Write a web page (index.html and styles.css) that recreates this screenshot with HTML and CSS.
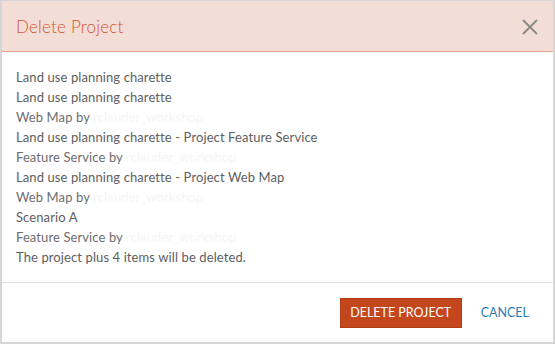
FILE: index.html
```html
<!DOCTYPE html>
<html>

<head>
    <title>Delete Project</title>
    <link rel="stylesheet" href="styles.css">
</head>

<body>
    <div class="modal">
        <div class="modal-header">
            <h2 class="modal-title">Delete Project</h2>
            <span class="modal-close">
                <svg width="16" height="16" viewBox="0 0 16 16">
                    <path d="M1 1 L15 15 M15 1 L1 15" stroke="#888" stroke-width="1.8" fill="none"/>
                </svg>
            </span>
        </div>
        <div class="modal-body">
            <p>Land use planning charette</p>
            <p>Land use planning charette</p>
            <p class="meta">Web Map by <span class="owner">rclauder_workshop</span></p>
            <p>Land use planning charette - Project Feature Service</p>
            <p class="meta">Feature Service by <span class="owner">rclauder_workshop</span></p>
            <p>Land use planning charette - Project Web Map</p>
            <p class="meta">Web Map by <span class="owner">rclauder_workshop</span></p>
            <p>Scenario A</p>
            <p class="meta">Feature Service by <span class="owner">rclauder_workshop</span></p>
            <p>The project plus 4 items will be deleted.</p>
        </div>
        <div class="modal-footer">
            <button type="button" class="btn-delete">DELETE PROJECT</button>
            <button type="button" class="btn-cancel">CANCEL</button>
        </div>
    </div>
</body>

</html>
```

FILE: styles.css
```css
body {
    margin: 0;
    background-color: #fff;
    font-family: 'Lato', 'Noto Sans', sans-serif;
}

.modal {
    width: 555px;
    height: 344px;
    box-sizing: border-box;
    border: 1px solid #d6d6d6;
    border-left: 2px solid #d6d6d6;
    border-right: 2px solid #d6d6d6;
    border-bottom: 2px solid #d6d6d6;
    display: flex;
    flex-direction: column;
}

.modal-header {
    height: 50px;
    background-color: #f3ded7;
    border-bottom: 1px solid #e6a593;
    display: flex;
    align-items: center;
    justify-content: space-between;
    padding: 0 15px 0 14px;
}

.modal-title {
    margin: 0;
    font-size: 17px;
    font-weight: 300;
    color: #d4532d;
    letter-spacing: 0.2px;
}

.modal-close {
    display: flex;
    margin-top: 2px;
}

.modal-body {
    padding: 15px 14px 0 14px;
    height: 215px;
    border-bottom: 1px solid #dedede;
}

.modal-body p {
    margin: 0;
    font-size: 13px;
    line-height: 20px;
    letter-spacing: 0.1px;
    color: #5e5e5e;
}

.modal-body p.meta {
    color: #6e6e6e;
}

.owner {
    color: #f6f6f6;
}

.modal-footer {
    flex: 1;
    display: flex;
    justify-content: flex-end;
    align-items: center;
    padding: 0 20px 0 0;
}

button {
    font-family: 'Lato', 'Noto Sans', sans-serif;
    font-size: 12.5px;
    border: none;
    cursor: pointer;
}

.btn-delete {
    background-color: #c4461d;
    color: #fff;
    height: 30px;
    width: 122px;
    padding: 0;
    margin-right: 15px;
    border: 1px solid #b23e18;
}

.btn-cancel {
    background: none;
    color: #2f7cb8;
    padding: 0 4px;
}
```
